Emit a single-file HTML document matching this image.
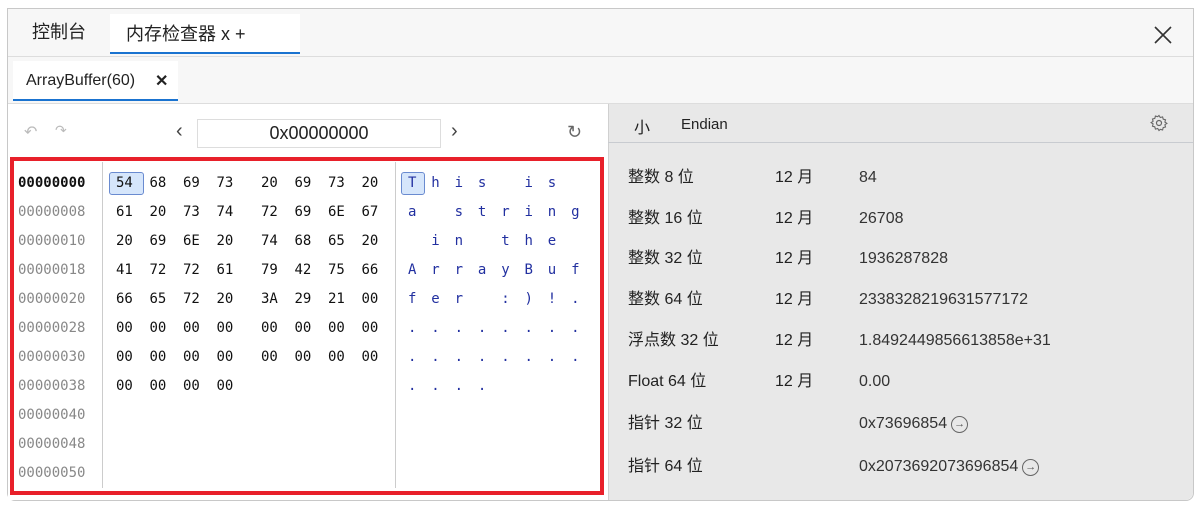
<!DOCTYPE html>
<html><head><meta charset="utf-8"><style>
*{margin:0;padding:0;box-sizing:border-box}
body{width:1200px;height:510px;background:#fff;position:relative;overflow:hidden;font-family:"Liberation Sans","Noto Sans CJK SC",sans-serif;color:#222}
.a{position:absolute;white-space:nowrap}
.mono{font-family:"DejaVu Sans Mono","Liberation Mono",monospace;font-size:14px}
.r{height:29px;line-height:29px}
.r span{display:inline-block;width:33.5px}
.r span.g{margin-left:11px}
.s span{display:inline-block;width:23.3px}
.p{height:24px;line-height:24px;display:flex;align-items:center}
.ic{display:inline-block;width:17px;height:17px;border:1.3px solid #666;border-radius:50%;font-size:11px;line-height:14px;text-align:center;margin-left:4px;color:#555}
</style></head><body>
<div class="a" style="left:7px;top:8px;width:1187px;height:493px;border:1px solid #c8c8c8;border-radius:0 0 8px 8px;background:#f7f7f7;overflow:hidden"></div>
<div class="a" style="left:32px;top:18px;font-size:18px">控制台</div>
<div class="a" style="left:110px;top:14px;width:190px;height:40px;background:#fff;border-bottom:2px solid #1a73d0"></div>
<div class="a" style="left:126px;top:20px;font-size:18px">内存检查器 x +</div>
<svg class="a" style="left:1153px;top:25px" width="20" height="20"><path d="M2 2L18 18M18 2L2 18" stroke="#333" stroke-width="1.6"/></svg>
<div class="a" style="left:8px;top:56px;width:1185px;height:1px;background:#ddd"></div>
<div class="a" style="left:13px;top:61px;width:165px;height:40px;background:#fff;border-bottom:2px solid #1a73d0"></div>
<div class="a" style="left:26px;top:72px;font-size:16px">ArrayBuffer(60)</div>
<div class="a" style="left:155px;top:71px;font-size:16px;font-weight:bold">✕</div>
<div class="a" style="left:8px;top:103px;width:1185px;height:1px;background:#ddd"></div>
<div class="a" style="left:8px;top:104px;width:600px;height:396px;background:#fff"></div>
<div class="a" style="left:24px;top:122px;font-size:16px;color:#bbb">↶</div>
<div class="a" style="left:55px;top:122px;font-size:14px;color:#bbb">↷</div>
<div class="a" style="left:176px;top:120px;font-size:20px;color:#444">‹</div>
<div class="a" style="left:197px;top:119px;width:244px;height:29px;border:1px solid #ddd;text-align:center;font-size:18px;line-height:27px">0x00000000</div>
<div class="a" style="left:451px;top:120px;font-size:20px;color:#444">›</div>
<div class="a" style="left:567px;top:122px;font-size:18px;color:#666">↻</div>
<div class="a" style="left:10px;top:157px;width:594px;height:338px;border:4px solid #e8202a"></div>
<div class="a" style="left:102px;top:162px;width:1px;height:326px;background:#ccc"></div>
<div class="a" style="left:395px;top:162px;width:1px;height:326px;background:#ccc"></div>
<div class="a mono" style="left:18px;top:169px;line-height:29px;color:#888"><b style="color:#111">00000000</b><br>00000008<br>00000010<br>00000018<br>00000020<br>00000028<br>00000030<br>00000038<br>00000040<br>00000048<br>00000050</div>
<div class="a" style="left:109px;top:172px;width:35px;height:23px;background:#d6e6fb;border:1px solid #6a8bd0;border-radius:3px"></div>
<div class="a" style="left:401px;top:172px;width:24px;height:23px;background:#d6e6fb;border:1px solid #6a8bd0;border-radius:3px"></div>
<div class="a mono" style="left:116px;top:169px;color:#111">
<div class="r"><span>54</span><span>68</span><span>69</span><span>73</span><span class="g">20</span><span>69</span><span>73</span><span>20</span></div>
<div class="r"><span>61</span><span>20</span><span>73</span><span>74</span><span class="g">72</span><span>69</span><span>6E</span><span>67</span></div>
<div class="r"><span>20</span><span>69</span><span>6E</span><span>20</span><span class="g">74</span><span>68</span><span>65</span><span>20</span></div>
<div class="r"><span>41</span><span>72</span><span>72</span><span>61</span><span class="g">79</span><span>42</span><span>75</span><span>66</span></div>
<div class="r"><span>66</span><span>65</span><span>72</span><span>20</span><span class="g">3A</span><span>29</span><span>21</span><span>00</span></div>
<div class="r"><span>00</span><span>00</span><span>00</span><span>00</span><span class="g">00</span><span>00</span><span>00</span><span>00</span></div>
<div class="r"><span>00</span><span>00</span><span>00</span><span>00</span><span class="g">00</span><span>00</span><span>00</span><span>00</span></div>
<div class="r"><span>00</span><span>00</span><span>00</span><span>00</span></div>
</div>
<div class="a mono s" style="left:408px;top:169px;color:#2230a0">
<div class="r"><span>T</span><span>h</span><span>i</span><span>s</span><span> </span><span>i</span><span>s</span></div>
<div class="r"><span>a</span><span> </span><span>s</span><span>t</span><span>r</span><span>i</span><span>n</span><span>g</span></div>
<div class="r"><span> </span><span>i</span><span>n</span><span> </span><span>t</span><span>h</span><span>e</span></div>
<div class="r"><span>A</span><span>r</span><span>r</span><span>a</span><span>y</span><span>B</span><span>u</span><span>f</span></div>
<div class="r"><span>f</span><span>e</span><span>r</span><span> </span><span>:</span><span>)</span><span>!</span><span>.</span></div>
<div class="r"><span>.</span><span>.</span><span>.</span><span>.</span><span>.</span><span>.</span><span>.</span><span>.</span></div>
<div class="r"><span>.</span><span>.</span><span>.</span><span>.</span><span>.</span><span>.</span><span>.</span><span>.</span></div>
<div class="r"><span>.</span><span>.</span><span>.</span><span>.</span></div>
</div>
<div class="a" style="left:608px;top:104px;width:585px;height:396px;background:#e8e8e8;border-left:1px solid #d0d0d0;border-radius:0 0 8px 0"></div>
<div class="a" style="left:608px;top:142px;width:585px;height:1px;background:#c8cbd0"></div>
<div class="a" style="left:634px;top:114px;font-size:16px">小</div>
<div class="a" style="left:681px;top:116px;font-size:15px">Endian</div>
<svg class="a" style="left:1150px;top:114px" width="18" height="18" viewBox="0 0 18 18"><circle cx="9" cy="9" r="2.5" fill="none" stroke="#666" stroke-width="1.2"/><path d="M9 1.5l1.3 2 2.3-.6.6 2.3 2.3.6-.6 2.3 2 1.3-2 1.3.6 2.3-2.3.6-.6 2.3-2.3-.6L9 16.5l-1.3-2-2.3.6-.6-2.3-2.3-.6.6-2.3-2-1.3 2-1.3-.6-2.3 2.3-.6.6-2.3 2.3.6z" fill="none" stroke="#666" stroke-width="1.1"/></svg>
<div class="a" style="left:628px;top:158px;font-size:16px;line-height:40.7px">整数 8 位<br>整数 16 位<br>整数 32 位<br>整数 64 位<br>浮点数 32 位<br>Float 64 位</div>
<div class="a" style="left:775px;top:158px;font-size:16px;line-height:40.7px">12 月<br>12 月<br>12 月<br>12 月<br>12 月<br>12 月</div>
<div class="a" style="left:859px;top:158px;font-size:16px;line-height:40.7px;color:#333">84<br>26708<br>1936287828<br>2338328219631577172<br>1.8492449856613858e+31<br>0.00</div>
<div class="a p" style="left:628px;top:412px;font-size:16px">指针 32 位</div>
<div class="a p" style="left:628px;top:455px;font-size:16px">指针 64 位</div>
<div class="a p" style="left:859px;top:412px;font-size:16px;color:#333">0x73696854<span class="ic">→</span></div>
<div class="a p" style="left:859px;top:455px;font-size:16px;color:#333">0x2073692073696854<span class="ic">→</span></div>
</body></html>
